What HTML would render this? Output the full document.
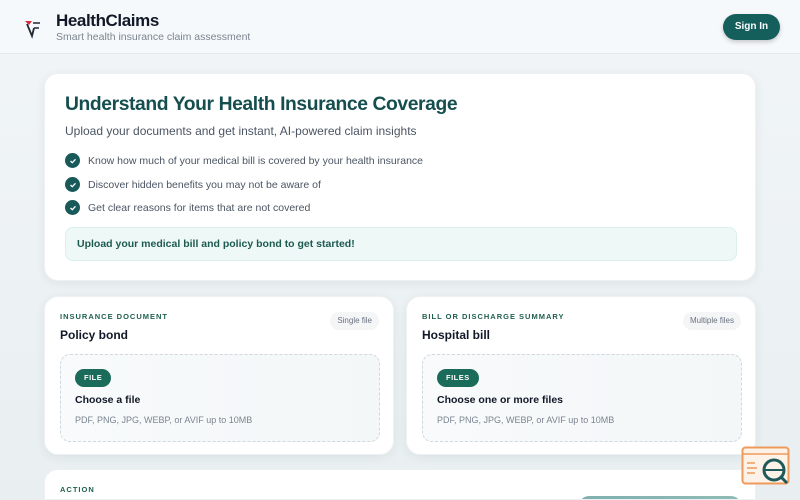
<!DOCTYPE html>
<html><head><meta charset="utf-8"><style>
*{box-sizing:border-box;margin:0;padding:0}
html{width:800px;height:500px;overflow:hidden}
body{width:800px;height:500px;overflow:hidden;font-family:"Liberation Sans",sans-serif;background:linear-gradient(180deg,#f1f5f7,#e9eff1);position:relative;color:#1f2937}
.hdr{position:absolute;left:0;top:0;width:800px;height:54px;background:#f6f9fb;border-bottom:1px solid #e2e8ec}
.brand{position:absolute;left:56px;top:11px;font-size:17px;font-weight:bold;color:#111827;letter-spacing:-0.4px}
.tag{position:absolute;left:56px;top:31px;font-size:10.5px;color:#7b8490}
.sign{position:absolute;left:723px;top:14px;width:57px;height:26px;border-radius:13px;background:#145e5c;color:#fff;font-size:10px;font-weight:bold;text-align:center;line-height:26px;box-shadow:0 2px 5px rgba(0,0,0,.2)}
.card{position:absolute;background:#fff;border-radius:14px;box-shadow:0 2px 10px rgba(20,40,50,.07);border:1px solid #eef1f3;overflow:hidden}
h1{position:absolute;left:20px;top:20px;font-size:19.3px;color:#164e4f;letter-spacing:-0.4px}
.sub{position:absolute;left:20px;top:50px;font-size:12px;color:#4b5563}
.li{position:absolute;left:20px;font-size:10.5px;color:#4b5563;display:flex;align-items:center}
.ck{width:15px;height:15px;border-radius:50%;background:#185a59;margin-right:8px;display:flex;align-items:center;justify-content:center}
.ban{position:absolute;left:20px;top:153px;width:672px;height:34px;background:#eef8f7;border:1px solid #dcefec;border-radius:8px;font-size:10.5px;font-weight:bold;color:#1d5a50;padding-left:11px;line-height:32px}
.lab{position:absolute;left:15px;top:15px;font-size:7.5px;font-weight:bold;letter-spacing:1px;color:#20604f}
.ttl{position:absolute;left:15px;top:31px;font-size:12px;font-weight:bold;color:#111827}
.pill{position:absolute;right:14px;top:15px;height:18px;padding:0 7px;border-radius:9px;background:#f3f5f6;font-size:8px;color:#6b7280;line-height:18px}
.drop{position:absolute;left:15px;top:57px;width:320px;height:88px;border:1px dashed #cfd8dc;border-radius:10px;background:linear-gradient(90deg,#f8fafb,#f3f7f8)}
.fb{position:absolute;left:14px;top:14px;height:18px;padding:0 9px;border-radius:9px;background:#1b6b5a;color:#fff;font-size:7.5px;font-weight:bold;line-height:18px;letter-spacing:.5px}
.ch{position:absolute;left:14px;top:39px;font-size:10.5px;font-weight:bold;color:#111827}
.fm{position:absolute;left:14px;top:60px;font-size:9px;color:#7b8490}
</style></head><body>
<div class="hdr">
<svg style="position:absolute;left:24px;top:19px" width="20" height="20" viewBox="0 0 20 20"><path d="M1 2 L8 2 L5 6 Z" fill="#d62b3a"/><path d="M3 5 L8 17 L10 9" fill="none" stroke="#1f2937" stroke-width="1.8"/><path d="M9 4 L16 4 M10 9 L15 9" stroke="#1f2937" stroke-width="1.6"/></svg>
<div class="brand">HealthClaims</div><div class="tag">Smart health insurance claim assessment</div>
<div class="sign">Sign In</div></div>
<div class="card" style="left:44px;top:73px;width:712px;height:208px">
<h1>Understand Your Health Insurance Coverage</h1>
<div class="sub">Upload your documents and get instant, AI-powered claim insights</div>
<div class="li" style="top:79px"><span class="ck"><svg width="8" height="8" viewBox="0 0 8 8"><path d="M1.5 4 L3.3 5.7 L6.5 2.3" stroke="#fff" stroke-width="1.3" fill="none"/></svg></span>Know how much of your medical bill is covered by your health insurance</div>
<div class="li" style="top:103px"><span class="ck"><svg width="8" height="8" viewBox="0 0 8 8"><path d="M1.5 4 L3.3 5.7 L6.5 2.3" stroke="#fff" stroke-width="1.3" fill="none"/></svg></span>Discover hidden benefits you may not be aware of</div>
<div class="li" style="top:126px"><span class="ck"><svg width="8" height="8" viewBox="0 0 8 8"><path d="M1.5 4 L3.3 5.7 L6.5 2.3" stroke="#fff" stroke-width="1.3" fill="none"/></svg></span>Get clear reasons for items that are not covered</div>
<div class="ban">Upload your medical bill and policy bond to get started!</div>
</div>
<div class="card" style="left:44px;top:296px;width:350px;height:159px">
<div class="lab">INSURANCE DOCUMENT</div><div class="ttl">Policy bond</div><div class="pill">Single file</div>
<div class="drop"><div class="fb">FILE</div><div class="ch">Choose a file</div><div class="fm">PDF, PNG, JPG, WEBP, or AVIF up to 10MB</div></div>
</div>
<div class="card" style="left:406px;top:296px;width:350px;height:159px">
<div class="lab">BILL OR DISCHARGE SUMMARY</div><div class="ttl">Hospital bill</div><div class="pill">Multiple files</div>
<div class="drop"><div class="fb">FILES</div><div class="ch">Choose one or more files</div><div class="fm">PDF, PNG, JPG, WEBP, or AVIF up to 10MB</div></div>
</div>
<div class="card" style="left:44px;top:469px;width:712px;height:31px;border-radius:14px 14px 0 0;box-shadow:none">
<div class="lab" style="top:15px">ACTION</div>
<div style="position:absolute;left:534px;top:26px;width:162px;height:20px;border-radius:10px;background:linear-gradient(90deg,#7fb0b0,#8fbcb5)"></div>
</div>
<svg style="position:absolute;left:741px;top:446px" width="52" height="42" viewBox="0 0 52 42"><rect x="1.5" y="1.5" width="46" height="36" rx="3" fill="#fdf2e8" stroke="#ee9a5a" stroke-width="2"/><line x1="1.5" y1="8" x2="47.5" y2="8" stroke="#ee9a5a" stroke-width="1.5"/><path d="M6 17 h8 M6 22 h10 M6 27 h8" stroke="#ee9a5a" stroke-width="1.5"/><circle cx="33" cy="24" r="10" fill="none" stroke="#1f5a5a" stroke-width="3"/><path d="M24 24 h18" stroke="#1f5a5a" stroke-width="2"/><path d="M40 31 l6 6" stroke="#1f5a5a" stroke-width="3"/></svg>
</body></html>
